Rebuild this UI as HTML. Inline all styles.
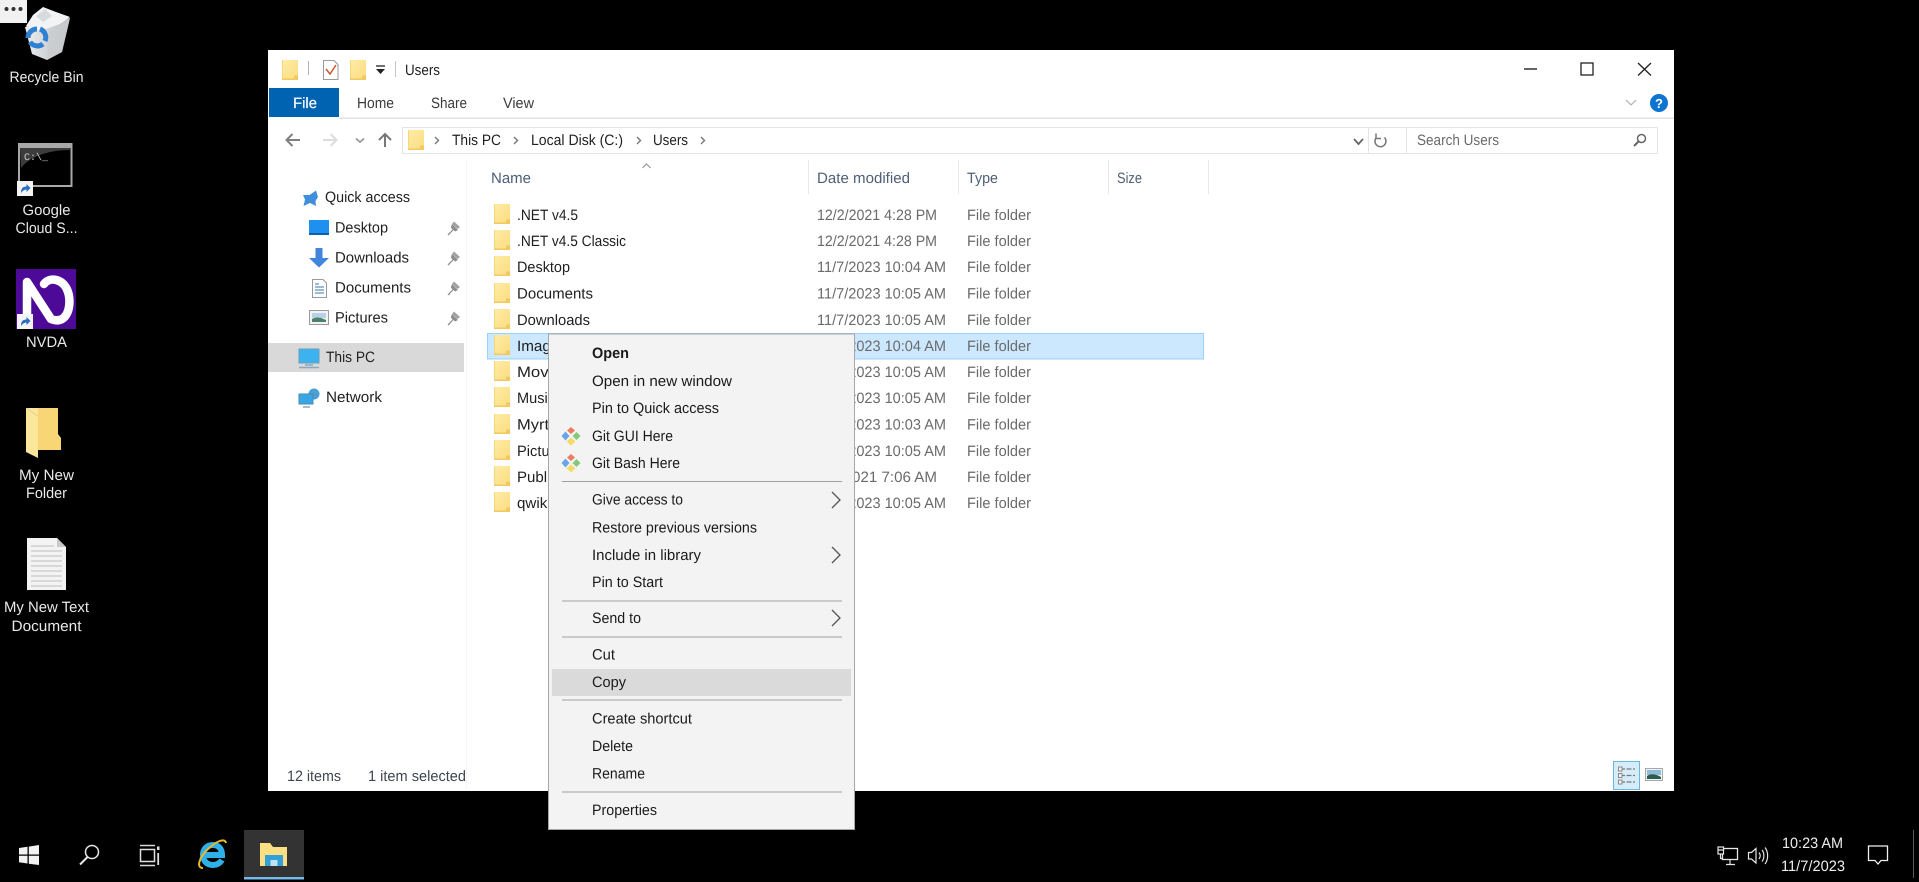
<!DOCTYPE html>
<html lang="en">
<head>
<meta charset="utf-8">
<title>Users</title>
<style>
html,body{margin:0;padding:0;background:#000;width:1919px;height:882px;overflow:hidden}
svg{display:block;filter:blur(.3px)}
text{font-family:"Liberation Sans",sans-serif;font-size:15px;text-rendering:geometricPrecision}
.d{fill:#e8e8e8;text-anchor:middle}
.k{fill:#1f1f1f}
.g{fill:#6b6b6b}
.h{fill:#4f6076}
.m{fill:#1a1a1a}
.r{fill:#3c3c3c}
.s{fill:#3f4650}
.t{fill:#ececec}
</style>
</head>
<body>
<svg xmlns="http://www.w3.org/2000/svg" width="1919" height="882" viewBox="0 0 1919 882">
<defs>
<linearGradient id="fg" x1="0" y1="0" x2="1" y2="1"><stop offset="0" stop-color="#ffeca6"/><stop offset="1" stop-color="#fbdc80"/></linearGradient>
<linearGradient id="bin" x1="0" y1="0" x2="1" y2="0"><stop offset="0" stop-color="#eceeef"/><stop offset="1" stop-color="#b6babd"/></linearGradient>
<g id="f"><path d="M0 0H16V20H0Z" fill="url(#fg)"/><path d="M0 18.500H12V15.500H16V20H0Z" fill="#f2c860"/><path d="M0 0H1V18.500H0Z" fill="#f8d778"/></g>
<g id="c"><path d="M0 0L8 8L0 16" fill="none" stroke="#555" stroke-width="1.300"/></g>
<g id="b"><path d="M0 0L3.500 3.500L0 7" fill="none" stroke="#777" stroke-width="1.400"/></g>
<g id="p"><path d="M5 3L11 9L8 10.500L6.500 9L1.500 14.500L0.500 13.500L5.500 8.500L3.800 6.500Z" fill="#8d8d8d"/><path d="M7 0.500L13 6L10.500 8L5 3Z" fill="#a2a2a2"/></g>
<g id="git"><path d="M0 -4.500L4 0L0 4.500L-4 0Z" transform="translate(-5.500 0)" fill="#6aa5ea"/><path d="M0 -3.500L4 0L0 3.500L-4 0Z" transform="translate(0 -5.500)" fill="#ea7d60"/><path d="M0 -4L4 0L0 4L-4 0Z" transform="translate(5.500 0)" fill="#84c878"/><path d="M0 -4L4.500 0L0 4L-4.500 0Z" transform="translate(0 5.500)" fill="#f4da66"/></g>
<g id="sc"><rect width="16" height="15" fill="#f4f4f4"/><path d="M4 12C4 7 6 5.500 9.500 5.500V3L13.500 7L9.500 11V8.500C7.500 8.500 6 9.500 4 12Z" fill="#2a6fc0"/></g>
</defs>

<rect width="1919" height="882" fill="#000"/>

<!-- Desktop icons -->
<path d="M25 27L70 18L62 52L47 60L32 54Z" fill="url(#bin)"/>
<path d="M26 26L33 15L43 7L56 12L70 17L60 24L46 29L36 31Z" fill="#f1f3f4"/>
<path d="M45 9L52 16L43 22L36 16Z" fill="#d7dbdd"/>
<path d="M47 60L49 33L70 18L62 52Z" fill="#c9cdcf" opacity=".75"/>
<path d="M28 38A9 9 0 0 1 37 29" fill="none" stroke="#2f80d4" stroke-width="5"/>
<path d="M40 29A9 9 0 0 1 45 41" fill="none" stroke="#2f80d4" stroke-width="5"/>
<path d="M43 44A9 9 0 0 1 30 42" fill="none" stroke="#2f80d4" stroke-width="5"/>
<rect width="27" height="23" fill="#f1f1f1"/>
<circle cx="6.500" cy="9" r="2" fill="#333"/><circle cx="13.500" cy="9" r="2" fill="#333"/><circle cx="20.500" cy="9" r="2" fill="#333"/>
<text class="d" x="46.500" y="82" textLength="74" lengthAdjust="spacingAndGlyphs">Recycle Bin</text>

<rect x="19" y="144" width="52.500" height="42" fill="#000" stroke="#a8a8a8" stroke-width="2"/>
<rect x="19" y="144" width="52" height="4" fill="#a8a8a8"/>
<path d="M21 168C30 156 50 150 70 150V148H20Z" fill="#3c3c3c"/>
<text x="24" y="160" style="font-family:'Liberation Mono',monospace;font-size:10px;fill:#cfcfcf">C:\_</text>
<use href="#sc" x="17" y="181"/>
<text class="d" x="46.500" y="215" textLength="48" lengthAdjust="spacingAndGlyphs">Google</text>
<text class="d" x="46.500" y="233" textLength="62" lengthAdjust="spacingAndGlyphs">Cloud S...</text>

<rect x="16" y="269" width="60" height="60" fill="#4d0a99"/>
<path d="M27 316V282L51 319C68 326 72 304 68 292C64 279 50 276 44 284" fill="none" stroke="#fff" stroke-width="8.500" stroke-linecap="round" stroke-linejoin="round"/>
<use href="#sc" x="17" y="314"/>
<text class="d" x="46.500" y="347" textLength="41" lengthAdjust="spacingAndGlyphs">NVDA</text>

<path d="M38 408H58V434L61 438V450H38Z" fill="#f8d675"/>
<path d="M26 408L38 416V458L26 452Z" fill="#fbe69c"/>
<path d="M26 408H38V416Z" fill="#fbe69c"/>
<text class="d" x="46.500" y="480" textLength="55" lengthAdjust="spacingAndGlyphs">My New</text>
<text class="d" x="46.500" y="498" textLength="41" lengthAdjust="spacingAndGlyphs">Folder</text>

<path d="M27 538H57L66 547V590H27Z" fill="#f3f3f3"/>
<path d="M57 538L66 547H57Z" fill="#c9c9c9"/>
<path d="M31 546H54M31 551H62M31 556H62M31 561H62M31 566H62M31 571H62M31 576H62M31 581H62M31 586H62" stroke="#bcbcbc" stroke-width="1"/>
<text class="d" x="46.500" y="612" textLength="85" lengthAdjust="spacingAndGlyphs">My New Text</text>
<text class="d" x="46.500" y="631" textLength="70" lengthAdjust="spacingAndGlyphs">Document</text>

<!-- Window -->
<rect x="268" y="50" width="1406" height="741" fill="#fff"/>

<!-- Title bar -->
<use href="#f" transform="translate(282 60)"/>
<rect x="308" y="61" width="1" height="14" fill="#b5b5b5"/>
<path d="M323.500 60.500H334L338 64.500V79.500H323.500Z" fill="#fff" stroke="#9a9a9a"/>
<path d="M326 69L330 74L336 65" fill="none" stroke="#d0562f" stroke-width="1.500"/>
<use href="#f" transform="translate(350 60)"/>
<path d="M376 66H385" stroke="#222" stroke-width="1.300"/><path d="M376 69L385 69L380.500 74Z" fill="#222"/>
<rect x="395" y="61" width="1" height="16" fill="#c4c4c4"/>
<text class="k" x="405" y="75" textLength="35" lengthAdjust="spacingAndGlyphs">Users</text>

<path d="M1524 69H1537" stroke="#222" stroke-width="1.400"/>
<rect x="1581" y="63" width="12" height="12" fill="none" stroke="#222" stroke-width="1.300"/>
<path d="M1638 63L1651 75.500M1651 63L1638 75.500" stroke="#222" stroke-width="1.300"/>

<!-- Ribbon tabs -->
<rect x="269" y="88" width="70" height="29" fill="#0063b1"/>
<rect x="339" y="117.500" width="1335" height="1.500" fill="#e2e2e2"/>
<text x="293" y="108" fill="#f4f8fc" stroke="#f4f8fc" stroke-width=".25" style="font-size:15px" textLength="24" lengthAdjust="spacingAndGlyphs">File</text>
<text class="r" x="357" y="108" textLength="37" lengthAdjust="spacingAndGlyphs">Home</text>
<text class="r" x="431" y="108" textLength="36" lengthAdjust="spacingAndGlyphs">Share</text>
<text class="r" x="503" y="108" textLength="31" lengthAdjust="spacingAndGlyphs">View</text>
<path d="M1626 100L1631 105L1636 100" fill="none" stroke="#b8b8b8" stroke-width="1.300"/>
<circle cx="1659" cy="103" r="9" fill="#0c74d1"/>
<text x="1659" y="108" fill="#fff" font-weight="700" text-anchor="middle" style="font-size:13px">?</text>

<!-- Nav bar -->
<path d="M300 140H287M292.500 134L286.500 140L292.500 146" fill="none" stroke="#7f7f7f" stroke-width="2"/>
<path d="M323 140H336M330.500 134L336.500 140L330.500 146" fill="none" stroke="#dcdcdc" stroke-width="2"/>
<path d="M356 138.500L360 142L364 138.500" fill="none" stroke="#9a9a9a" stroke-width="1.800"/>
<path d="M385 147V134M379 140L385 134L391 140" fill="none" stroke="#777" stroke-width="2"/>

<rect x="402.500" y="127.500" width="1220" height="26" fill="#fff" stroke="#e4e4e4"/>
<rect x="1368" y="128" width="1" height="25" fill="#e4e4e4"/>
<use href="#f" transform="translate(408 130)"/>
<use href="#b" x="435" y="137"/>
<text class="k" x="452" y="145" textLength="49" lengthAdjust="spacingAndGlyphs">This PC</text>
<use href="#b" x="514" y="137"/>
<text class="k" x="531" y="145" textLength="92" lengthAdjust="spacingAndGlyphs">Local Disk (C:)</text>
<use href="#b" x="637" y="137"/>
<text class="k" x="653" y="145" textLength="35" lengthAdjust="spacingAndGlyphs">Users</text>
<use href="#b" x="701" y="137"/>
<path d="M1354 139L1358.500 144L1363 139" fill="none" stroke="#666" stroke-width="1.800"/>
<path d="M1384.500 137.500A5.500 5.500 0 1 1 1376 138M1376 133.500V138.500H1381" fill="none" stroke="#777" stroke-width="1.500"/>

<rect x="1406.500" y="127.500" width="251" height="26" fill="#fff" stroke="#e4e4e4"/>
<text class="g" x="1417" y="145" textLength="82" lengthAdjust="spacingAndGlyphs">Search Users</text>
<circle cx="1641.500" cy="138.500" r="4" fill="none" stroke="#666" stroke-width="1.500"/>
<path d="M1638.500 141.500L1634 146" stroke="#666" stroke-width="2"/>

<!-- Sidebar -->
<rect x="268" y="343" width="196" height="29" fill="#d9d9d9"/>
<rect x="466" y="160" width="1" height="630" fill="#f6f6f6"/>

<path d="M316 190.500L318 197L315.500 201L316 206L310 203L303.500 206L305 199.500L303 195L309.500 195Z" fill="#3f8fdc"/>
<text class="k" x="325" y="202.200" textLength="85" lengthAdjust="spacingAndGlyphs">Quick access</text>

<rect x="309" y="220" width="20" height="15" fill="#1e90f0"/><rect x="309" y="233" width="20" height="2" fill="#0f5fae"/>
<text class="k" x="335" y="232.300" textLength="53" lengthAdjust="spacingAndGlyphs">Desktop</text>
<use href="#p" x="447" y="221"/>

<path d="M315.500 248H322.500V258H329L319 267.500L309 258H315.500Z" fill="#3f86dc"/>
<text class="k" x="335" y="262.300" textLength="74" lengthAdjust="spacingAndGlyphs">Downloads</text>
<use href="#p" x="447" y="251"/>

<path d="M312.500 279.500H323L326.500 283V297.500H312.500Z" fill="#fff" stroke="#9a9a9a"/>
<path d="M315 284H319M315 287H324M315 290H324M315 293H324" stroke="#5d93bf" stroke-width="1.300"/>
<text class="k" x="335" y="292.300" textLength="76" lengthAdjust="spacingAndGlyphs">Documents</text>
<use href="#p" x="447" y="281"/>

<rect x="309.500" y="310.500" width="19" height="14" fill="#f3f3f3" stroke="#9a9a9a"/>
<path d="M312 313H326V318H312Z" fill="#b7d3e8"/><path d="M312 319C317 316 322 318 326 320V322H312Z" fill="#4e7f6d"/>
<text class="k" x="335" y="322.300" textLength="53" lengthAdjust="spacingAndGlyphs">Pictures</text>
<use href="#p" x="447" y="311"/>

<rect x="299" y="349" width="20" height="14" fill="#3cb2ee" stroke="#6d9fc0"/>
<path d="M305 365H313M299 367.500H319" stroke="#8aa7bd" stroke-width="1.500"/>
<text class="k" x="326" y="362.200" textLength="49" lengthAdjust="spacingAndGlyphs">This PC</text>

<circle cx="314" cy="394" r="5.500" fill="#4a9fd4"/>
<rect x="299" y="394" width="14" height="10" fill="#39a7e6" stroke="#4a88b0"/>
<path d="M303 407H310" stroke="#8aa7bd" stroke-width="1.500"/>
<text class="k" x="326" y="402.200" textLength="56" lengthAdjust="spacingAndGlyphs">Network</text>

<!-- Column headers -->
<path d="M642.500 168L646.500 164L650.500 168" fill="none" stroke="#9a9a9a" stroke-width="1.200"/>
<text class="h" x="491" y="183" textLength="40" lengthAdjust="spacingAndGlyphs">Name</text>
<text class="h" x="817" y="183" textLength="93" lengthAdjust="spacingAndGlyphs">Date modified</text>
<text class="h" x="967" y="183" textLength="31" lengthAdjust="spacingAndGlyphs">Type</text>
<text class="h" x="1117" y="183" textLength="25" lengthAdjust="spacingAndGlyphs">Size</text>
<rect x="808" y="160" width="1" height="34" fill="#e8e8e8"/>
<rect x="958" y="160" width="1" height="34" fill="#e8e8e8"/>
<rect x="1108" y="160" width="1" height="34" fill="#e8e8e8"/>
<rect x="1208" y="160" width="1" height="34" fill="#e8e8e8"/>

<!-- Selected row -->
<rect x="487.500" y="333.500" width="716" height="25.500" fill="#cce8ff" stroke="#99d1ff"/>

<!-- Rows -->
<use href="#f" transform="translate(494 204)"/>
<use href="#f" transform="translate(494 230)"/>
<use href="#f" transform="translate(494 256)"/>
<use href="#f" transform="translate(494 283)"/>
<use href="#f" transform="translate(494 309)"/>
<use href="#f" transform="translate(494 335)"/>
<use href="#f" transform="translate(494 361)"/>
<use href="#f" transform="translate(494 387)"/>
<use href="#f" transform="translate(494 414)"/>
<use href="#f" transform="translate(494 440)"/>
<use href="#f" transform="translate(494 466)"/>
<use href="#f" transform="translate(494 492)"/>

<text class="k" x="517" y="220" textLength="61" lengthAdjust="spacingAndGlyphs">.NET v4.5</text>
<text class="k" x="517" y="246" textLength="109" lengthAdjust="spacingAndGlyphs">.NET v4.5 Classic</text>
<text class="k" x="517" y="272" textLength="53" lengthAdjust="spacingAndGlyphs">Desktop</text>
<text class="k" x="517" y="298.500" textLength="76" lengthAdjust="spacingAndGlyphs">Documents</text>
<text class="k" x="517" y="325" textLength="73" lengthAdjust="spacingAndGlyphs">Downloads</text>
<text class="k" x="517" y="351" textLength="50" lengthAdjust="spacingAndGlyphs">Images</text>
<text class="k" x="517" y="377" textLength="53" lengthAdjust="spacingAndGlyphs">Movies</text>
<text class="k" x="517" y="403" textLength="38" lengthAdjust="spacingAndGlyphs">Music</text>
<text class="k" x="517" y="429.500" textLength="45" lengthAdjust="spacingAndGlyphs">Myrtle</text>
<text class="k" x="517" y="456" textLength="53" lengthAdjust="spacingAndGlyphs">Pictures</text>
<text class="k" x="517" y="482" textLength="41" lengthAdjust="spacingAndGlyphs">Public</text>
<text class="k" x="517" y="508" textLength="58" lengthAdjust="spacingAndGlyphs">qwiklabs</text>

<text class="g" x="817" y="220" textLength="120" lengthAdjust="spacingAndGlyphs">12/2/2021 4:28 PM</text>
<text class="g" x="817" y="246" textLength="120" lengthAdjust="spacingAndGlyphs">12/2/2021 4:28 PM</text>
<text class="g" x="817" y="272" textLength="129" lengthAdjust="spacingAndGlyphs">11/7/2023 10:04 AM</text>
<text class="g" x="817" y="298.500" textLength="129" lengthAdjust="spacingAndGlyphs">11/7/2023 10:05 AM</text>
<text class="g" x="817" y="325" textLength="129" lengthAdjust="spacingAndGlyphs">11/7/2023 10:05 AM</text>
<text class="g" x="817" y="351" textLength="129" lengthAdjust="spacingAndGlyphs">11/7/2023 10:04 AM</text>
<text class="g" x="817" y="377" textLength="129" lengthAdjust="spacingAndGlyphs">11/7/2023 10:05 AM</text>
<text class="g" x="817" y="403" textLength="129" lengthAdjust="spacingAndGlyphs">11/7/2023 10:05 AM</text>
<text class="g" x="817" y="429.500" textLength="129" lengthAdjust="spacingAndGlyphs">11/7/2023 10:03 AM</text>
<text class="g" x="817" y="456" textLength="129" lengthAdjust="spacingAndGlyphs">11/7/2023 10:05 AM</text>
<text class="g" x="810" y="482" textLength="127" lengthAdjust="spacingAndGlyphs">12/7/2021 7:06 AM</text>
<text class="g" x="817" y="508" textLength="129" lengthAdjust="spacingAndGlyphs">11/7/2023 10:05 AM</text>

<text class="g" x="967" y="220" textLength="64" lengthAdjust="spacingAndGlyphs">File folder</text>
<text class="g" x="967" y="246" textLength="64" lengthAdjust="spacingAndGlyphs">File folder</text>
<text class="g" x="967" y="272" textLength="64" lengthAdjust="spacingAndGlyphs">File folder</text>
<text class="g" x="967" y="298.500" textLength="64" lengthAdjust="spacingAndGlyphs">File folder</text>
<text class="g" x="967" y="325" textLength="64" lengthAdjust="spacingAndGlyphs">File folder</text>
<text class="g" x="967" y="351" textLength="64" lengthAdjust="spacingAndGlyphs">File folder</text>
<text class="g" x="967" y="377" textLength="64" lengthAdjust="spacingAndGlyphs">File folder</text>
<text class="g" x="967" y="403" textLength="64" lengthAdjust="spacingAndGlyphs">File folder</text>
<text class="g" x="967" y="429.500" textLength="64" lengthAdjust="spacingAndGlyphs">File folder</text>
<text class="g" x="967" y="456" textLength="64" lengthAdjust="spacingAndGlyphs">File folder</text>
<text class="g" x="967" y="482" textLength="64" lengthAdjust="spacingAndGlyphs">File folder</text>
<text class="g" x="967" y="508" textLength="64" lengthAdjust="spacingAndGlyphs">File folder</text>

<!-- Status bar -->
<text class="s" x="287" y="781" textLength="54" lengthAdjust="spacingAndGlyphs">12 items</text>
<text class="s" x="368" y="781" textLength="98" lengthAdjust="spacingAndGlyphs">1 item selected</text>
<rect x="1613.500" y="761.500" width="26" height="28" fill="#d5ecfb" stroke="#6cb6d9"/>
<path d="M1620 769H1635M1620 775.500H1635M1620 782H1635" stroke="#7a7a7a" stroke-width="1.200" stroke-dasharray="5 1.500"/>
<rect x="1618.500" y="767" width="3.500" height="4" fill="#f3f3f3" stroke="#8a8a8a"/>
<rect x="1618.500" y="773.500" width="3.500" height="4" fill="#f3f3f3" stroke="#8a8a8a"/>
<rect x="1618.500" y="780" width="3.500" height="4" fill="#f3f3f3" stroke="#8a8a8a"/>
<rect x="1645.500" y="768.500" width="17" height="12" fill="#eef3f5" stroke="#a8a8a8"/>
<path d="M1647 770H1661V775H1647Z" fill="#8fbcdc"/><path d="M1647 776C1651 773 1656 774 1661 777V779H1647Z" fill="#2d5a4e"/>

<!-- Context menu -->
<rect x="548.500" y="334" width="306" height="495.500" fill="#f3f3f3" stroke="#a6a6a6"/>
<rect x="552" y="669" width="299" height="27" fill="#dadada"/>
<path d="M562 481.500H842M562 601H842M562 637H842M562 700H842M562 792H842" stroke="#a0a0a0" stroke-width="1"/>

<text class="m" x="592" y="358" font-weight="700" textLength="37" lengthAdjust="spacingAndGlyphs">Open</text>
<text class="m" x="592" y="386" textLength="140" lengthAdjust="spacingAndGlyphs">Open in new window</text>
<text class="m" x="592" y="413" textLength="127" lengthAdjust="spacingAndGlyphs">Pin to Quick access</text>
<use href="#git" x="571" y="436"/>
<text class="m" x="592" y="441" textLength="81" lengthAdjust="spacingAndGlyphs">Git GUI Here</text>
<use href="#git" x="571" y="463"/>
<text class="m" x="592" y="468" textLength="88" lengthAdjust="spacingAndGlyphs">Git Bash Here</text>
<text class="m" x="592" y="504.500" textLength="91" lengthAdjust="spacingAndGlyphs">Give access to</text>
<use href="#c" x="832" y="492"/>
<text class="m" x="592" y="532.500" textLength="165" lengthAdjust="spacingAndGlyphs">Restore previous versions</text>
<text class="m" x="592" y="560" textLength="109" lengthAdjust="spacingAndGlyphs">Include in library</text>
<use href="#c" x="832" y="547"/>
<text class="m" x="592" y="587" textLength="71" lengthAdjust="spacingAndGlyphs">Pin to Start</text>
<text class="m" x="592" y="623" textLength="49" lengthAdjust="spacingAndGlyphs">Send to</text>
<use href="#c" x="832" y="610"/>
<text class="m" x="592" y="659.500" textLength="23" lengthAdjust="spacingAndGlyphs">Cut</text>
<text class="m" x="592" y="687" textLength="34" lengthAdjust="spacingAndGlyphs">Copy</text>
<text class="m" x="592" y="723.500" textLength="100" lengthAdjust="spacingAndGlyphs">Create shortcut</text>
<text class="m" x="592" y="751" textLength="41" lengthAdjust="spacingAndGlyphs">Delete</text>
<text class="m" x="592" y="778.500" textLength="53" lengthAdjust="spacingAndGlyphs">Rename</text>
<text class="m" x="592" y="815" textLength="65" lengthAdjust="spacingAndGlyphs">Properties</text>

<!-- Taskbar -->
<path d="M19 848L27.500 846.800V854.500H19ZM28.800 846.600L39 845V854.500H28.800ZM19 855.800H27.500V863.500L19 862.300ZM28.800 855.800H39V865L28.800 863.700Z" fill="#f2f2f2"/>
<circle cx="92" cy="852" r="6.500" fill="none" stroke="#e6e6e6" stroke-width="1.500"/>
<path d="M87.500 857L80 864.500" stroke="#e6e6e6" stroke-width="2"/>
<path d="M140 845.500H155M140 865.500H155" stroke="#d8d8d8" stroke-width="1.500"/>
<rect x="140.500" y="849.500" width="14" height="12" fill="none" stroke="#e0e0e0" stroke-width="1.500"/>
<rect x="157" y="846.500" width="2.500" height="3.500" fill="#e0e0e0"/>
<path d="M158.200 853V865" stroke="#e0e0e0" stroke-width="1.800"/>

<path d="M203 855H222C222 848 218 845 213 845C207 845 203 849 203 855C203 861 207 865 213 865C217 865 220 863 222 860" fill="none" stroke="#2fb0e8" stroke-width="6"/>
<path d="M203 868C196 868 199 858 207 850C215 842 225 837 226 843" fill="none" stroke="#e8b92d" stroke-width="2"/>

<rect x="244" y="830" width="60" height="47" fill="#333"/>
<rect x="244" y="877" width="60" height="2.500" fill="#76b9ed"/>
<path d="M260 843H270L273 847H287V866H260Z" fill="#fbdf83"/>
<path d="M265 855H283V866H265Z" fill="#34a0d8"/>
<rect x="270.500" y="860" width="7" height="6" fill="#bfe3f5"/>

<!-- Tray -->
<rect x="1722.500" y="848.500" width="15" height="11" fill="none" stroke="#e6e6e6" stroke-width="1.300"/>
<rect x="1718" y="847" width="5.500" height="7" fill="#000" stroke="#e6e6e6" stroke-width="1.200"/>
<path d="M1718 850H1723.500M1720.500 854V858.500H1723M1730 860V864M1726 864.500H1735" fill="none" stroke="#e6e6e6" stroke-width="1.200"/>
<path d="M1748.500 852.500H1751.500L1756 848.500V863L1751.500 859H1748.500Z" fill="none" stroke="#e6e6e6" stroke-width="1.200"/>
<path d="M1759 852.500C1760.500 854.500 1760.500 857 1759 859M1762 850C1764.500 853 1764.500 858.500 1762 861.500M1765 847.500C1768.500 852 1768.500 859.500 1765 864" fill="none" stroke="#e6e6e6" stroke-width="1.200"/>
<text class="t" x="1782" y="848" textLength="61" lengthAdjust="spacingAndGlyphs">10:23 AM</text>
<text class="t" x="1781" y="871" textLength="64" lengthAdjust="spacingAndGlyphs">11/7/2023</text>
<path d="M1868.500 846H1887.500V860.500H1881L1878 864L1875 860.500H1868.500Z" fill="none" stroke="#efefef" stroke-width="1.300"/>
<rect x="1913" y="830" width="1" height="48" fill="#5a5a5a"/>
</svg>
</body>
</html>
